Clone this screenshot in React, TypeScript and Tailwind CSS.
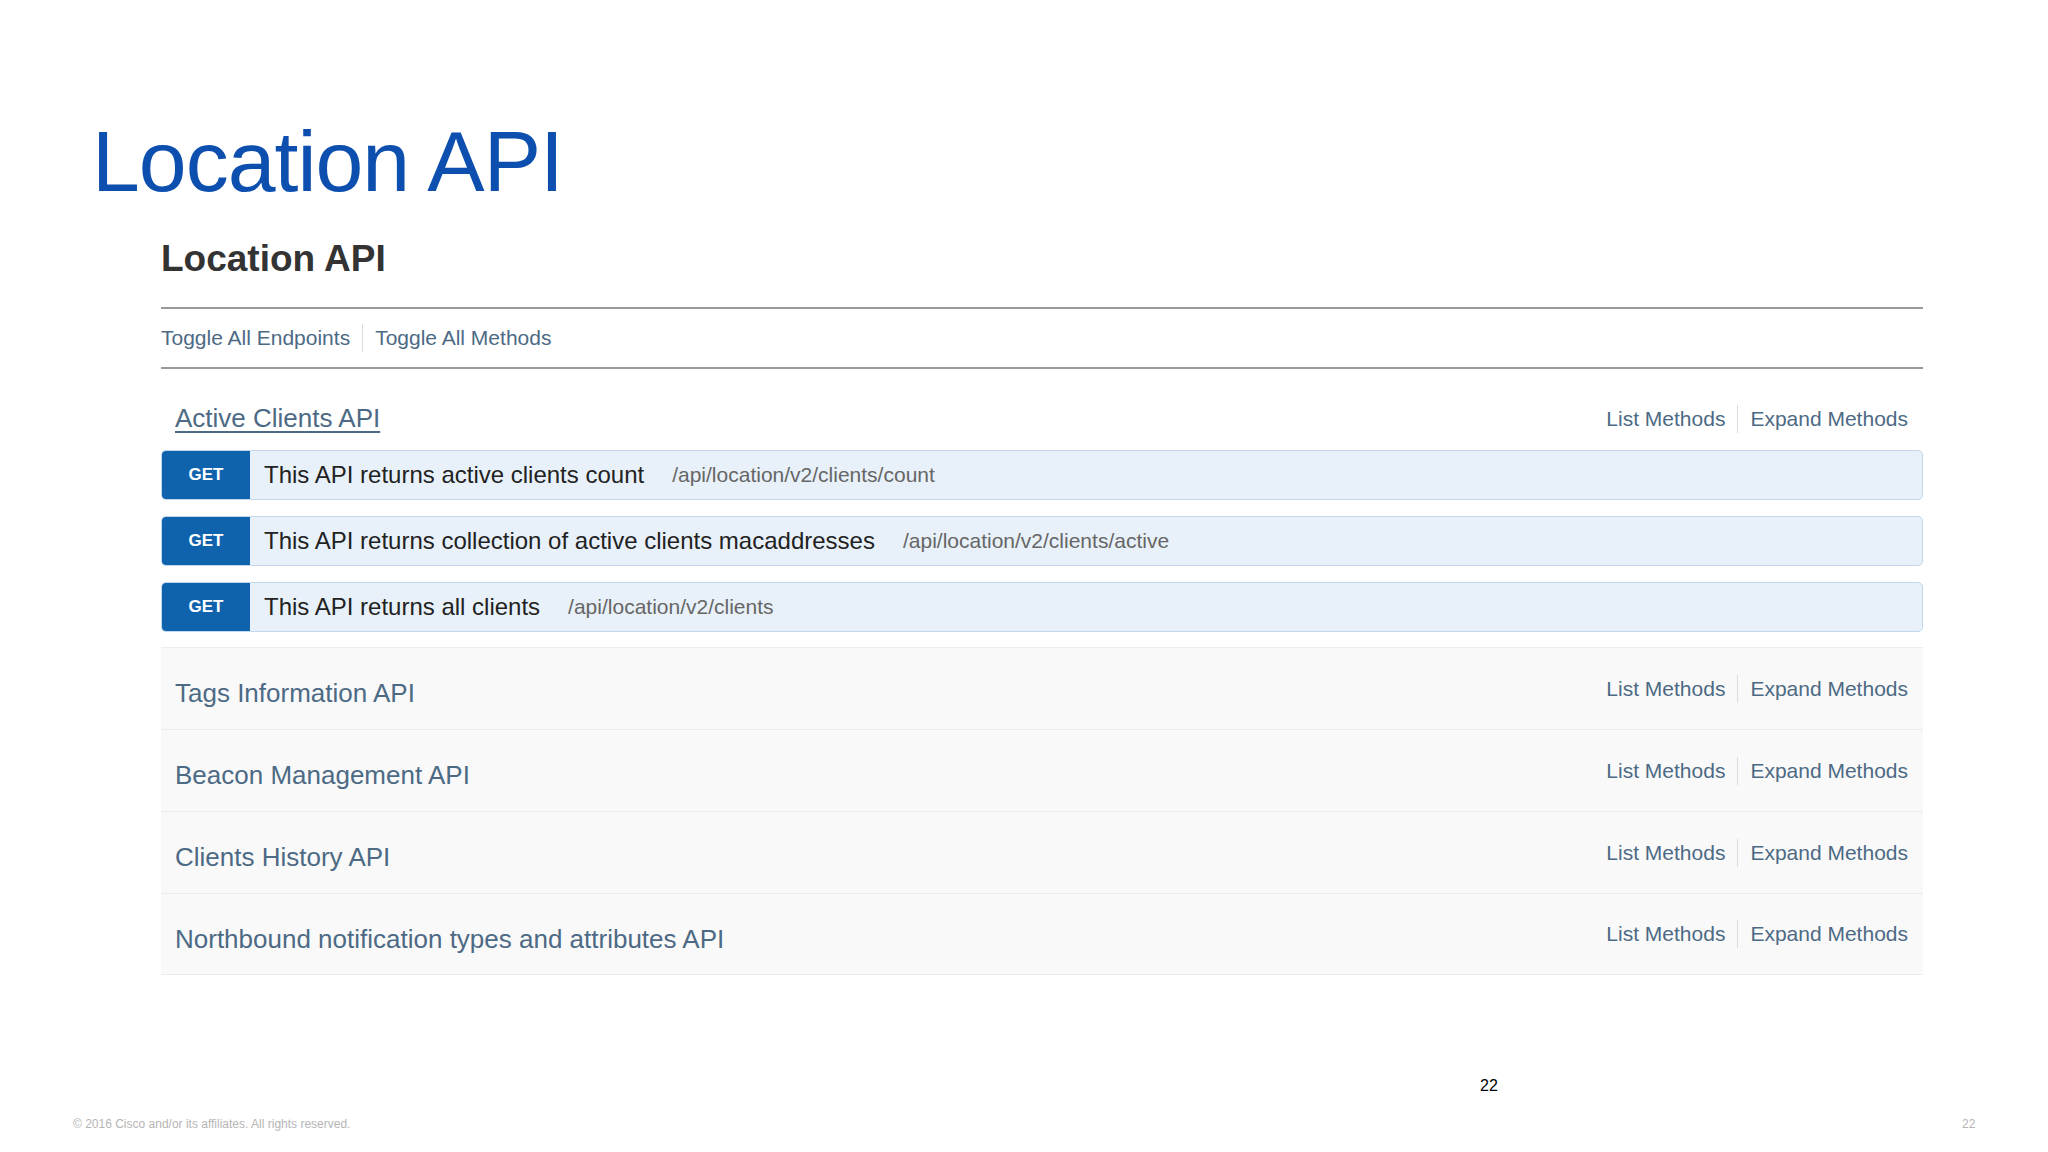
const endpoints = [
  { desc: "This API returns active clients count", path: "/api/location/v2/clients/count" },
  { desc: "This API returns collection of active clients macaddresses", path: "/api/location/v2/clients/active" },
  { desc: "This API returns all clients", path: "/api/location/v2/clients" },
];

const sections = [
  "Tags Information API",
  "Beacon Management API",
  "Clients History API",
  "Northbound notification types and attributes API",
];

function MethodLinks() {
  return (
    <div className="flex items-center text-[21px] text-[#4d6a85]">
      <span className="pr-3">List Methods</span>
      <span className="h-[28px] w-px bg-[#ddd]" />
      <span className="pl-3">Expand Methods</span>
    </div>
  );
}

export default function App() {
  return (
    <div
      className="relative h-[1152px] w-[2048px] overflow-hidden bg-white"
      style={{ fontFamily: "Arial, 'Liberation Sans', Helvetica, sans-serif" }}
    >
      <h1 className="absolute left-[92px] top-[118px] text-[86px] leading-none tracking-[-1px] text-[#0d4fae]">
        Location API
      </h1>

      <div className="absolute left-[161px] top-[240px] w-[1762px]">
        <h2 className="text-[37px] font-bold leading-none text-[#333]">Location API</h2>
        <div className="mt-[30px] border-t-2 border-[#9a9a9a]" />
        <div className="flex h-[58px] items-center text-[21px] text-[#4d6a85]">
          <span className="pr-3">Toggle All Endpoints</span>
          <span className="h-[28px] w-px bg-[#ddd]" />
          <span className="pl-3">Toggle All Methods</span>
        </div>
        <div className="border-t-2 border-[#9a9a9a]" />

        <div className="flex items-center justify-between pl-[14px] pr-[15px] pt-[30px] pb-[12px]">
          <span className="text-[26px] text-[#4d6a85] underline underline-offset-4">Active Clients API</span>
          <MethodLinks />
        </div>

        <div className="flex flex-col gap-[16px]">
          {endpoints.map((e) => (
            <div
              key={e.path}
              className="flex h-[50px] items-center overflow-hidden rounded-[5px] border border-[#c3d8ea] bg-[#e8f1f9]"
            >
              <div className="flex h-full w-[88px] items-center justify-center bg-[#0f63ad] text-[17px] font-bold text-white">
                GET
              </div>
              <span className="ml-[14px] text-[24px] text-[#222]">{e.desc}</span>
              <span className="ml-[28px] text-[21px] text-[#666]">{e.path}</span>
            </div>
          ))}
        </div>

        <div className="mt-[15px] bg-[#f9f9f9]">
          {sections.map((s) => (
            <div
              key={s}
              className="flex h-[82px] items-center justify-between border-t border-[#ececec] pl-[14px] pr-[15px] last:border-b"
            >
              <span className="mt-[10px] text-[26px] text-[#4d6a85]">{s}</span>
              <MethodLinks />
            </div>
          ))}
        </div>
      </div>

      <div className="absolute left-[1480px] top-[1074px] text-[16px] text-black">22</div>
      <div className="absolute left-[73px] top-[1115px] text-[12px] text-[#b5b5b5]">
        © 2016 Cisco and/or its affiliates. All rights reserved.
      </div>
      <div className="absolute left-[1962px] top-[1115px] text-[12px] text-[#b5b5b5]">22</div>
    </div>
  );
}
